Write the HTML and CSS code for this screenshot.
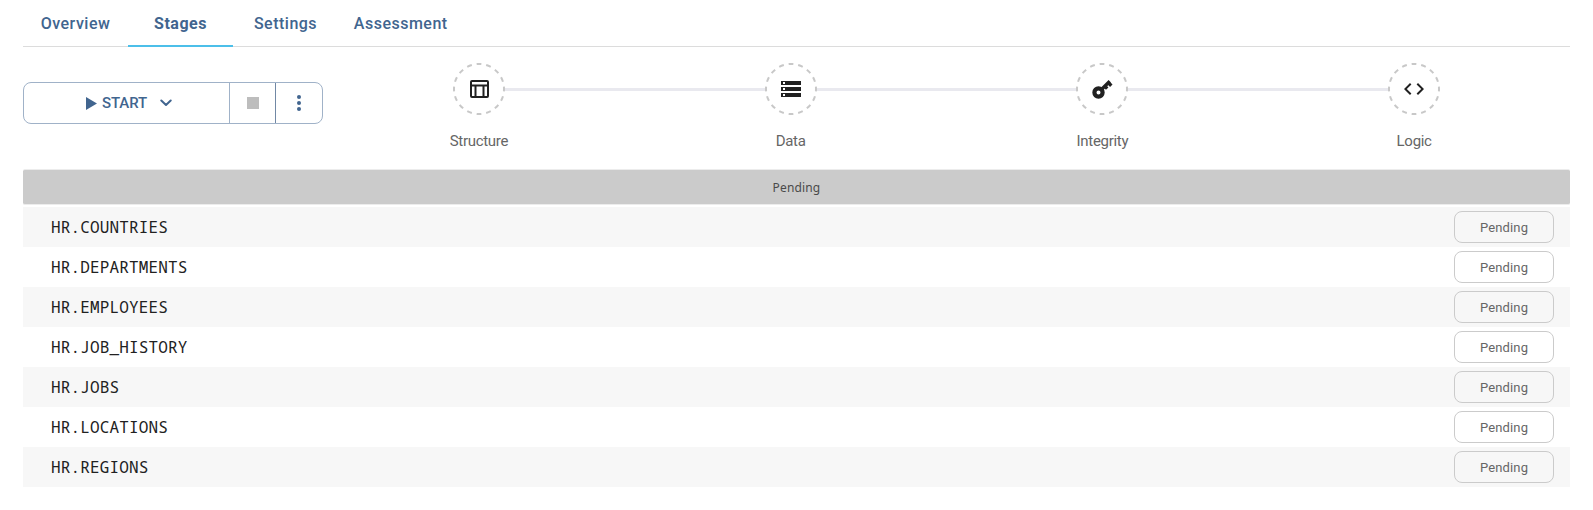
FILE: index.html
```html
<!DOCTYPE html>
<html lang="en">
<head>
<meta charset="utf-8">
<title>Stages</title>
<link rel="stylesheet" href="styles.css">
</head>
<body>
<main class="page">
  <nav class="tabs">
    <a class="tab">Overview</a>
    <a class="tab active">Stages</a>
    <a class="tab">Settings</a>
    <a class="tab wide">Assessment</a>
  </nav>
  <section class="toolbar">
    <div class="actions">
      <button class="start">
        <svg class="play" width="11" height="13" viewBox="0 0 11 13"><path d="M0 0v13l11-6.500z"/></svg>
        <span class="start-label">START</span>
        <svg class="chevron" width="12" height="8" viewBox="0 0 12 8"><path d="M1.300 1.500L6 6l4.700-4.500"/></svg>
      </button>
      <button class="stop"><span class="square"></span></button>
      <button class="more"><svg width="4" height="16" viewBox="0 0 4 16"><circle cx="2" cy="2" r="2"/><circle cx="2" cy="8" r="2"/><circle cx="2" cy="14" r="2"/></svg></button>
    </div>
    <div class="steps">
      <div class="step">
        <div class="track"><i class="line none"></i><svg class="circle" viewBox="0 0 52 52"><circle class="ring" cx="26" cy="26" r="25" pathLength="160"/><path transform="translate(14.500 14)" fill-rule="evenodd" d="M4.500 3h15a2 2 0 0 1 2 2v14a2 2 0 0 1-2 2h-15a2 2 0 0 1-2-2V5a2 2 0 0 1 2-2zM4.500 5v2.500h15V5zM4.500 9.500V19H7V9.500zM9 9.500V19h6V9.500zM17 9.500V19h2.500V9.500z"/></svg><i class="line"></i></div>
        <span class="step-label">Structure</span>
      </div>
      <div class="step">
        <div class="track"><i class="line"></i><svg class="circle" viewBox="0 0 52 52"><circle class="ring" cx="26" cy="26" r="25" pathLength="160"/><path transform="translate(14 14)" d="M2 20h20v-4H2v4zm2-3h2v2H4v-2zM2 4v4h20V4H2zm4 3H4V5h2v2zm-4 7h20v-4H2v4zm2-3h2v2H4v-2z"/></svg><i class="line"></i></div>
        <span class="step-label">Data</span>
      </div>
      <div class="step">
        <div class="track"><i class="line"></i><svg class="circle" viewBox="0 0 52 52"><circle class="ring" cx="26" cy="26" r="25" pathLength="160"/><g transform="translate(14 14)" class="key"><circle cx="8.500" cy="15.500" r="4.100" stroke-width="4.200"/><path stroke-width="3.400" d="M11.500 12.500l8.300-8.300M18.400 5.700l2.900 3M14.900 9.200l2.300 2.400"/></g></svg><i class="line"></i></div>
        <span class="step-label">Integrity</span>
      </div>
      <div class="step">
        <div class="track"><i class="line"></i><svg class="circle" viewBox="0 0 52 52"><circle class="ring" cx="26" cy="26" r="25" pathLength="160"/><path transform="translate(14 14)" d="M9.400 16.600L4.800 12l4.600-4.600L8 6l-6 6 6 6 1.400-1.400zm5.200 0l4.600-4.600-4.600-4.600L16 6l6 6-6 6-1.400-1.400z"/></svg><i class="line none"></i></div>
        <span class="step-label">Logic</span>
      </div>
    </div>
  </section>
  <div class="status">Pending</div>
  <ul class="tables">
    <li class="row"><span class="name">HR.COUNTRIES</span><span class="chip">Pending</span></li>
    <li class="row"><span class="name">HR.DEPARTMENTS</span><span class="chip">Pending</span></li>
    <li class="row"><span class="name">HR.EMPLOYEES</span><span class="chip">Pending</span></li>
    <li class="row"><span class="name">HR.JOB_HISTORY</span><span class="chip">Pending</span></li>
    <li class="row"><span class="name">HR.JOBS</span><span class="chip">Pending</span></li>
    <li class="row"><span class="name">HR.LOCATIONS</span><span class="chip">Pending</span></li>
    <li class="row"><span class="name">HR.REGIONS</span><span class="chip">Pending</span></li>
  </ul>
</main>
</body>
</html>
```
FILE: styles.css
```css
* { box-sizing: border-box; }
body { margin: 0; background: #fff; font-family: Roboto, sans-serif; color: #212121; }
.page { width: 1547px; margin-left: 23px; }
.tabs { display: flex; height: 47px; box-shadow: inset 0 -1px #dcdcdc; }
.tab { width: 105px; text-align: center; font-size: 16px; line-height: 47px; font-weight: 500; letter-spacing: 0.5px; color: #41658f; }
.tab.active { font-weight: 700; border-bottom: 2px solid #4cbfe9; }
.tab.wide { width: 125.500px; }
.toolbar { display: flex; height: 122px; }
.actions { display: flex; width: 300px; height: 42px; margin-top: 35px; border: 1px solid #a0b2c8; border-radius: 8px; }
button { display: flex; align-items: center; justify-content: center; padding: 0; border: 0; background: none; font-family: inherit; }
.start { width: 206px; justify-content: flex-start; padding-left: 62px; border-right: 1px solid #a0b2c8; color: #41658f; fill: #41658f; }
.start-label { width: 45px; margin-left: 5px; font-size: 15px; font-weight: 500; letter-spacing: -0.1px; text-align: left; }
.chevron { margin-left: 13px; fill: none; stroke: #41658f; stroke-width: 2; stroke-linecap: round; stroke-linejoin: round; }
.stop { width: 46px; border-right: 1px solid #7188a5; }
.square { width: 12px; height: 12px; background: #bdbdbd; }
.more { width: 46px; fill: #41658f; }
.steps { display: flex; flex: 1; padding-top: 16px; }
.step { flex: 1; display: flex; flex-direction: column; align-items: center; }
.track { display: flex; align-items: center; width: 100%; }
.line { flex: 1; height: 3px; background: #e9e9ef; }
.line.none { background: none; }
.circle { width: 52px; height: 52px; fill: #212121; }
.ring { fill: none; stroke: #c8c8c8; stroke-width: 2; stroke-dasharray: 5 5; stroke-dashoffset: 2.5; }
.key { fill: none; stroke: #212121; }
.step-label { margin-top: 16px; font-size: 15px; line-height: 20px; letter-spacing: -0.3px; color: #666; }
.status { height: 36px; border: 1px solid #ececec; border-width: 1px 0; border-radius: 2px; background: #cbcbcb; text-align: center; font: 12px/35px "Noto Sans", sans-serif; letter-spacing: 0.15px; color: #4a4a4a; }
.tables { list-style: none; margin: 2px 0 0; padding: 0; }
.row { display: flex; align-items: center; justify-content: space-between; height: 40px; padding: 0 16px 0 28px; }
.row:nth-child(odd) { background: #f7f7f7; }
.name { font-family: "Noto Sans Mono", "Droid Sans Mono", "DejaVu Sans Mono", monospace; font-size: 16px; letter-spacing: 0.15px; }
.chip { width: 100px; height: 32px; border: 1px solid #cbcbcb; border-radius: 8px; text-align: center; font-size: 13px; line-height: 32px; letter-spacing: 0.15px; color: #666; }
```
